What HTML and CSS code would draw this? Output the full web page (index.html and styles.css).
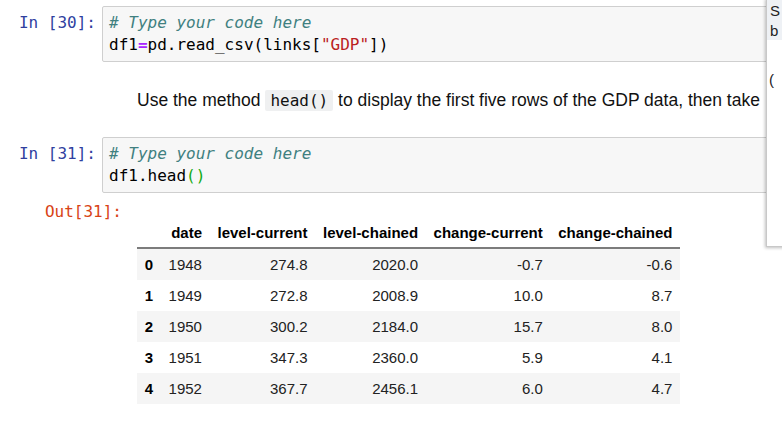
FILE: index.html
```html
<!DOCTYPE html>
<html>
<head>
<meta charset="utf-8">
<link rel="stylesheet" href="styles.css">
</head>
<body>
<div class="notebook">
  <div class="cell code-cell">
    <div class="prompt in">In&nbsp;[30]:</div>
    <div class="input-box">
      <div class="line"><span class="cm-comment"># Type your code here</span></div>
      <div class="line">df1<span class="cm-op">=</span>pd.read_csv(links[<span class="cm-str">"GDP"</span>])</div>
    </div>
  </div>

  <div class="md-cell">
    <p>Use the method <code>head()</code> to display the first five rows of the GDP data, then take</p>
  </div>

  <div class="cell code-cell">
    <div class="prompt in">In&nbsp;[31]:</div>
    <div class="input-box">
      <div class="line"><span class="cm-comment"># Type your code here</span></div>
      <div class="line">df1.head<span class="cm-match">()</span></div>
    </div>
  </div>

  <div class="cell out-cell">
    <div class="prompt out">Out[31]:</div>
    <div class="output">
      <table class="df">
        <thead>
          <tr><th></th><th>date</th><th>level-current</th><th>level-chained</th><th>change-current</th><th>change-chained</th></tr>
        </thead>
        <tbody>
          <tr><th>0</th><td>1948</td><td>274.8</td><td>2020.0</td><td>-0.7</td><td>-0.6</td></tr>
          <tr><th>1</th><td>1949</td><td>272.8</td><td>2008.9</td><td>10.0</td><td>8.7</td></tr>
          <tr><th>2</th><td>1950</td><td>300.2</td><td>2184.0</td><td>15.7</td><td>8.0</td></tr>
          <tr><th>3</th><td>1951</td><td>347.3</td><td>2360.0</td><td>5.9</td><td>4.1</td></tr>
          <tr><th>4</th><td>1952</td><td>367.7</td><td>2456.1</td><td>6.0</td><td>4.7</td></tr>
        </tbody>
      </table>
    </div>
  </div>
</div>

<div class="side-panel">
  <div class="side-head">
    <div class="side-line">S</div>
    <div class="side-line">b</div>
  </div>
  <div class="side-body">
    <div class="side-line">(</div>
  </div>
</div>
</body>
</html>
```

FILE: styles.css
```css
html, body {
  margin: 0;
  padding: 0;
  background: #ffffff;
  overflow: hidden;
  width: 782px;
  height: 446px;
}

body {
  position: relative;
  font-family: "Liberation Sans", Arial, sans-serif;
  color: #000;
}

.notebook {
  padding-top: 6px;
  width: 820px;
}

.cell {
  display: flex;
  align-items: flex-start;
}

.prompt {
  font-family: "DejaVu Sans Mono", monospace;
  font-size: 16px;
  line-height: 22px;
  text-align: right;
  white-space: nowrap;
  flex: none;
}

.prompt.in {
  width: 96px;
  padding-right: 6px;
  padding-top: 6px;
  color: #303f9f;
}

.prompt.out {
  width: 122px;
  color: #d84315;
}

.input-box {
  flex: 1;
  border: 1px solid #cfcfcf;
  border-radius: 2px;
  background: #f7f7f7;
  padding: 5px 6px;
  height: 44px;
  font-family: "DejaVu Sans Mono", monospace;
  font-size: 16px;
  line-height: 22px;
  color: #000;
}

.line {
  white-space: pre;
}

.cm-comment {
  color: #408080;
  font-style: italic;
}

.cm-op {
  color: #aa22ff;
  font-weight: bold;
}

.cm-str {
  color: #ba2121;
}

.cm-match {
  color: #11aa11;
}

.md-cell {
  margin-left: 137px;
  padding-top: 27px;
  padding-bottom: 26px;
}

.md-cell p {
  margin: 0;
  font-size: 17.5px;
  line-height: 22px;
  height: 22px;
  white-space: nowrap;
  color: #111;
}

.md-cell code {
  font-family: "DejaVu Sans Mono", monospace;
  font-size: 16px;
  background: #eff0f1;
  padding: 1px 5px;
  border-radius: 2px;
}

.out-cell {
  padding-top: 8px;
}

.output {
  padding-left: 15px;
  padding-top: 15px;
}

.df {
  border-collapse: collapse;
  font-size: 15px;
  line-height: 16px;
  color: #222;
}

.df th, .df td {
  padding: 7.5px 7.75px;
  text-align: right;
  vertical-align: middle;
  white-space: nowrap;
}

.df thead th {
  padding-top: 8.5px;
  padding-bottom: 6.5px;
}

.df th {
  font-weight: bold;
  color: #000;
}

.df thead tr {
  border-bottom: 2px solid #7c7c7c;
}

.df tbody tr:nth-child(odd) {
  background: #f5f5f5;
}

.side-panel {
  position: absolute;
  top: -2px;
  left: 766px;
  width: 40px;
  height: 248px;
  background: #ffffff;
  border-left: 1px solid #c8c8c8;
  border-bottom: 1px solid #c8c8c8;
  box-shadow: -1px 1px 3px rgba(0, 0, 0, 0.25);
  overflow: hidden;
  font-family: "Liberation Sans", Arial, sans-serif;
  font-size: 15px;
  line-height: 20px;
  color: #222;
}

.side-head {
  background: #eef1f5;
  padding: 3px 0 0 3px;
  height: 39px;
}

.side-body {
  padding: 30px 0 0 2px;
}

.side-line {
  white-space: nowrap;
}
```
